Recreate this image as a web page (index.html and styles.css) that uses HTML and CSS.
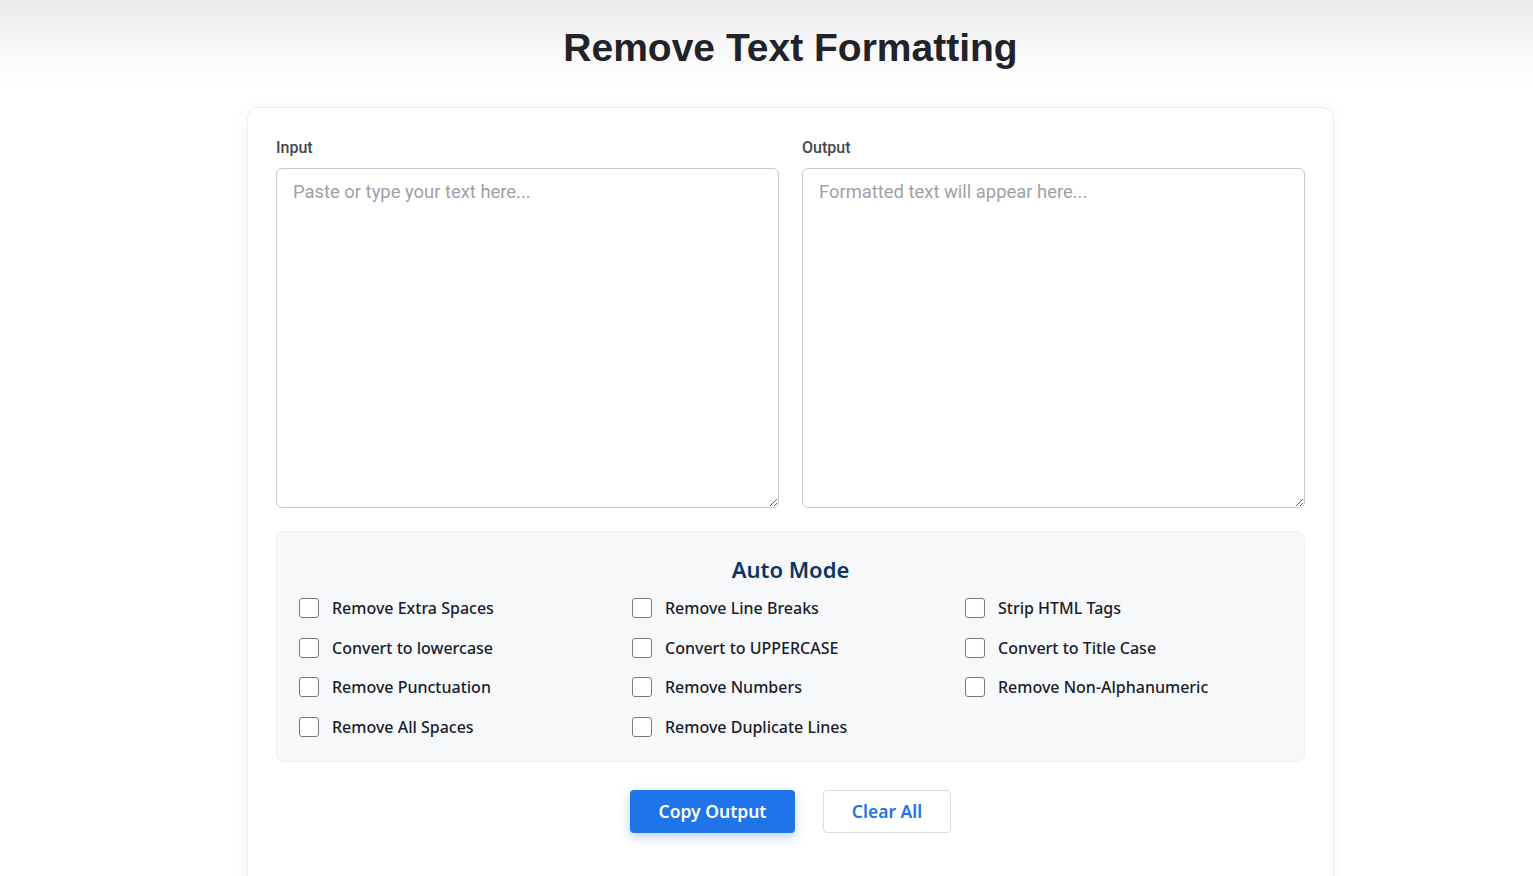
FILE: index.html
```html
<!DOCTYPE html>
<html>
<head>
    <title>Remove Text Formatting</title>
    <meta name="viewport" content="width=device-width, initial-scale=1.0">
    <link rel="stylesheet" href="styles.css">
</head>
<body>
    <h1>Remove Text Formatting</h1>

    <div class="card">
        <!-- Input / Output -->
        <div class="io-row">
            <div class="io-col">
                <label for="input">Input</label>
                <textarea id="input" placeholder="Paste or type your text here..."></textarea>
            </div>
            <div class="io-col">
                <label for="output">Output</label>
                <textarea id="output" placeholder="Formatted text will appear here..." readonly></textarea>
            </div>
        </div>

        <!-- Options -->
        <div class="auto-mode">
            <h2>Auto Mode</h2>
            <div class="options">
                <label class="opt"><input type="checkbox"> Remove Extra Spaces</label>
                <label class="opt"><input type="checkbox"> Remove Line Breaks</label>
                <label class="opt"><input type="checkbox"> Strip HTML Tags</label>
                <label class="opt"><input type="checkbox"> Convert to lowercase</label>
                <label class="opt"><input type="checkbox"> Convert to UPPERCASE</label>
                <label class="opt"><input type="checkbox"> Convert to Title Case</label>
                <label class="opt"><input type="checkbox"> Remove Punctuation</label>
                <label class="opt"><input type="checkbox"> Remove Numbers</label>
                <label class="opt"><input type="checkbox"> Remove Non-Alphanumeric</label>
                <label class="opt"><input type="checkbox"> Remove All Spaces</label>
                <label class="opt"><input type="checkbox"> Remove Duplicate Lines</label>
            </div>
        </div>

        <div class="actions">
            <button class="btn-primary">Copy Output</button>
            <button class="btn-secondary">Clear All</button>
        </div>
    </div>
</body>
</html>
```

FILE: styles.css
```css
body {
    font-family: "Noto Sans", Arial, sans-serif;
    margin: 0;
    padding: 0 0 0 48px;
    background: linear-gradient(to bottom, #e9e9e9 0px, #fbfbfb 60px, #ffffff 90px);
    color: #1c1f2b;
}

h1 {
    font-family: "Liberation Sans", Arial, sans-serif;
    font-size: 39px;
    font-weight: bold;
    line-height: 48px;
    text-align: center;
    color: #212329;
    margin: 24px 0 35px;
}

.card {
    width: 1029px;
    margin: 0 auto;
    padding: 28px 28px 80px;
    background: #fff;
    border: 1px solid #edebf8;
    border-radius: 12px;
    box-shadow: 0 0 14px rgba(120, 110, 200, 0.07);
}

.io-row {
    display: flex;
    gap: 23px;
}

.io-col {
    flex: 1;
    display: flex;
    flex-direction: column;
}

.io-col label {
    font-family: Roboto, sans-serif;
    font-size: 16px;
    font-weight: 500;
    color: #45484f;
    margin: 2px 0 10px;
    line-height: 20px;
}

textarea {
    height: 340px;
    box-sizing: border-box;
    padding: 12px 16px;
    font-family: Roboto, sans-serif;
    font-size: 18.4px;
    border: 1px solid #c8c8cc;
    border-radius: 6px;
    color: #333;
    outline: none;
}

textarea::placeholder {
    color: #9e9fa8;
}

.auto-mode {
    margin-top: 23px;
    background: #f7f8fa;
    border: 1px solid #eef0f6;
    border-radius: 8px;
    padding: 22px 22px 14px;
}

.auto-mode h2 {
    font-family: "Noto Sans", sans-serif;
    font-size: 22px;
    font-weight: 600;
    color: #0c3566;
    text-align: center;
    margin: 0 0 4px;
    line-height: 30px;
}

.options {
    display: grid;
    grid-template-columns: repeat(3, 1fr);
    column-gap: 16px;
}

.opt {
    display: flex;
    align-items: center;
    gap: 13px;
    height: 39.7px;
    font-size: 16px;
    font-weight: 500;
    color: #1a1d2c;
    cursor: pointer;
}

.opt input {
    appearance: none;
    -webkit-appearance: none;
    width: 20px;
    height: 20px;
    margin: 0;
    border: 1px solid #7a7a7a;
    border-radius: 3px;
    background: #fff;
    flex-shrink: 0;
}

.opt input:checked {
    background: #1e74e8;
    border-color: #1e74e8;
}

.actions {
    display: flex;
    justify-content: center;
    gap: 28px;
    margin-top: 28px;
}

.actions button {
    font-family: "Noto Sans", sans-serif;
    font-size: 17.5px;
    font-weight: 600;
    height: 43px;
    border-radius: 4px;
    cursor: pointer;
}

.btn-primary {
    width: 165px;
    background: #1e74e8;
    color: #fff;
    border: none;
    box-shadow: 0 4px 12px rgba(30, 116, 232, 0.3);
}

.btn-secondary {
    width: 128px;
    background: #fff;
    color: #1e74e8;
    border: 1px solid #d5dce8;
}
```
